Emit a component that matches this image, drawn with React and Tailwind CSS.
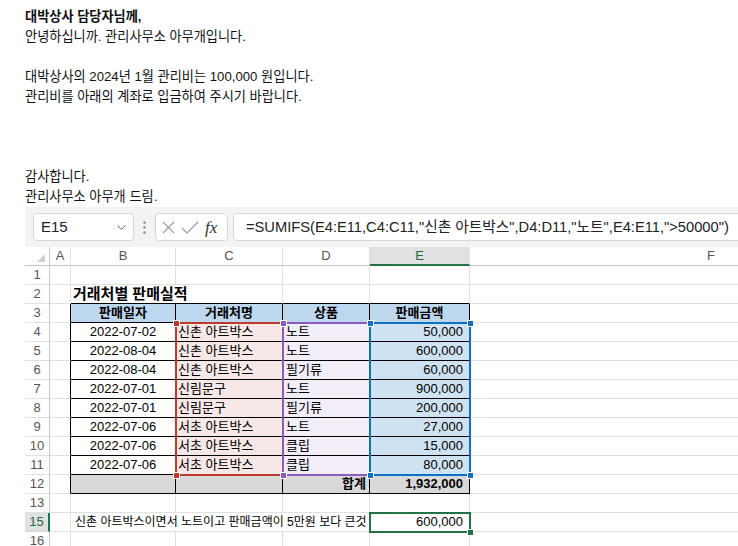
import { ChevronDown } from 'lucide-react';

const rows = [
  ['2022-07-02', '신촌 아트박스', '노트', '50,000'],
  ['2022-08-04', '신촌 아트박스', '노트', '600,000'],
  ['2022-08-04', '신촌 아트박스', '필기류', '60,000'],
  ['2022-07-01', '신림문구', '노트', '900,000'],
  ['2022-07-01', '신림문구', '필기류', '200,000'],
  ['2022-07-06', '서초 아트박스', '노트', '27,000'],
  ['2022-07-06', '서초 아트박스', '클립', '15,000'],
  ['2022-07-06', '서초 아트박스', '클립', '80,000'],
];

// 기본 눈금선 / 표 테두리
const GRID = 'border-r border-b border-[#e1e1e1]';
const BLACK = 'border-r border-b border-black';

const RowHead = ({ n, active }) =>
  active ? (
    <div className="flex items-center justify-center bg-[#e1e1e1] text-[13px] text-[#1e6b41] border-r-2 border-r-[#217346] border-b border-b-[#d4d4d4]">
      {n}
    </div>
  ) : (
    <div className="flex items-center justify-center text-[13px] text-[#555] border-r border-r-[#c6c6c6] border-b border-b-[#e1e1e1]">
      {n}
    </div>
  );

const Handle = ({ x, y, color }) => (
  <div
    className={`absolute w-[7px] h-[7px] border border-white ${color}`}
    style={{ left: x - 3, top: y - 3 }}
  />
);

export default function App() {
  return (
    <div className="w-[738px] h-[546px] overflow-hidden bg-white text-[#1a1a1a] [font-family:'Liberation_Sans','Noto_Sans_CJK_KR',sans-serif]">
      {/* 메일 본문 */}
      <div className="pt-[7px] pl-[25px] h-[207px] text-[13.2px] leading-[20px] text-[#111]">
        <p className="font-bold">대박상사 담당자님께,</p>
        <p>안녕하십니까. 관리사무소 아무개입니다.</p>
        <p>&nbsp;</p>
        <p>대박상사의 2024년 1월 관리비는 100,000 원입니다.</p>
        <p>관리비를 아래의 계좌로 입금하여 주시기 바랍니다.</p>
        <p>&nbsp;</p>
        <p>&nbsp;</p>
        <p>&nbsp;</p>
        <p>감사합니다.</p>
        <p>관리사무소 아무개 드림.</p>
      </div>

      <div className="ml-[25px] overflow-hidden">
        {/* 수식 입력줄 */}
        <div className="h-[40px] bg-[#f3f3f3] flex items-center pl-[8px]">
          <div className="shrink-0 w-[101px] h-[28px] bg-white border border-[#d6d6d6] rounded-[4px] flex items-center justify-between pl-[7px] pr-[4px]">
            <span className="text-[15px] text-[#222]">E15</span>
            <ChevronDown size={15} strokeWidth={1.5} className="text-[#555]" />
          </div>
          <div className="shrink-0 w-[21px] flex justify-center">
            <svg width="3" height="13" viewBox="0 0 3 13">
              <circle cx="1.5" cy="1.5" r="1.2" fill="#8a8a8a" />
              <circle cx="1.5" cy="6.5" r="1.2" fill="#8a8a8a" />
              <circle cx="1.5" cy="11.5" r="1.2" fill="#8a8a8a" />
            </svg>
          </div>
          <div className="shrink-0 w-[73px] h-[28px] bg-white border border-[#d6d6d6] rounded-[4px] flex items-center pl-[6px] gap-[6px]">
            <svg width="13" height="13" viewBox="0 0 13 13">
              <path d="M1 1 L12 12 M12 1 L1 12" stroke="#9b9b9b" strokeWidth="1.1" fill="none" />
            </svg>
            <svg width="18" height="13" viewBox="0 0 18 13">
              <path d="M1 7 L6 12 L17 1" stroke="#9b9b9b" strokeWidth="1.1" fill="none" />
            </svg>
            <span className="text-[17px] italic text-[#333] [font-family:'Liberation_Serif',serif] leading-none">fx</span>
          </div>
          <div className="shrink-0 ml-[5px] w-[540px] h-[28px] bg-white border border-[#d6d6d6] rounded-[4px] flex items-center pl-[12px]">
            <span className="text-[14.7px] text-[#222] whitespace-nowrap">
              =SUMIFS(E4:E11,C4:C11,"신촌 아트박스",D4:D11,"노트",E4:E11,"&gt;50000")
            </span>
          </div>
        </div>

        {/* 시트 */}
        <div className="relative w-[927px] grid grid-cols-[25px_21px_105px_107px_87px_100px_482px] auto-rows-[19px] text-[#000]">
          {/* 열 머리글 */}
          <div className="relative border-r border-b border-[#c6c6c6]">
            <svg className="absolute right-[4px] bottom-[3px]" width="8" height="8" viewBox="0 0 8 8">
              <polygon points="8,0 8,8 0,8" fill="#d0d0d0" />
            </svg>
          </div>
          {['A', 'B', 'C', 'D'].map((c) => (
            <div key={c} className="flex items-center justify-center text-[13px] text-[#555] border-r border-r-[#e1e1e1] border-b border-b-[#c6c6c6]">
              {c}
            </div>
          ))}
          <div className="flex items-center justify-center bg-[#e1e1e1] text-[13px] text-[#1e6b41] border-b-2 border-b-[#217346] border-r border-r-[#e1e1e1]">
            E
          </div>
          <div className="flex items-center justify-center text-[13px] text-[#555] border-b border-b-[#c6c6c6]">F</div>

          {/* 1행 */}
          <RowHead n={1} />
          <div className={GRID} />
          <div className={GRID} />
          <div className={GRID} />
          <div className={GRID} />
          <div className={GRID} />
          <div className={GRID} />

          {/* 2행 */}
          <RowHead n={2} />
          <div className="border-r border-b border-r-[#e1e1e1] border-b-[#e1e1e1]" />
          <div className="col-span-2 flex items-center pl-[2px] text-[15px] font-bold border-r border-b border-r-[#e1e1e1] border-b-black">
            거래처별 판매실적
          </div>
          <div className="border-r border-b border-r-[#e1e1e1] border-b-black" />
          <div className="border-r border-b border-r-[#e1e1e1] border-b-black" />
          <div className={GRID} />

          {/* 3행 머리글 */}
          <RowHead n={3} />
          <div className="border-r border-b border-r-black border-b-[#e1e1e1]" />
          {['판매일자', '거래처명', '상품', '판매금액'].map((h) => (
            <div key={h} className={`${BLACK} bg-[#bdd7ee] flex items-center justify-center text-[13px] font-bold`}>
              {h}
            </div>
          ))}
          <div className={GRID} />

          {/* 4~11행 */}
          {rows.map((r, i) => [
            <RowHead key={`h${i}`} n={i + 4} />,
            <div key={`a${i}`} className="border-r border-b border-r-black border-b-[#e1e1e1]" />,
            <div key={`b${i}`} className={`${BLACK} flex items-center justify-center text-[13px]`}>{r[0]}</div>,
            <div key={`c${i}`} className={`${BLACK} bg-[#f7e8e8] flex items-center pl-[2px] text-[13px]`}>{r[1]}</div>,
            <div key={`d${i}`} className={`${BLACK} bg-[#f2edf7] flex items-center pl-[3px] text-[13px]`}>{r[2]}</div>,
            <div key={`e${i}`} className={`${BLACK} bg-[#cfe2f2] flex items-center justify-end pr-[6px] text-[13px]`}>{r[3]}</div>,
            <div key={`f${i}`} className={GRID} />,
          ])}

          {/* 12행 합계 */}
          <RowHead n={12} />
          <div className="border-r border-b border-r-black border-b-[#e1e1e1]" />
          <div className={`${BLACK} bg-[#d9d9d9]`} />
          <div className={`${BLACK} bg-[#d9d9d9]`} />
          <div className={`${BLACK} bg-[#d9d9d9] flex items-center justify-end pr-[3px] text-[13px] font-bold`}>합계</div>
          <div className={`${BLACK} bg-[#d9d9d9] flex items-center justify-end pr-[6px] text-[13px] font-bold`}>1,932,000</div>
          <div className={GRID} />

          {/* 13행 */}
          <RowHead n={13} />
          <div className={GRID} />
          <div className={GRID} />
          <div className={GRID} />
          <div className={GRID} />
          <div className={GRID} />
          <div className={GRID} />

          {/* 15행 (14행 숨김) */}
          <RowHead n={15} active />
          <div className={GRID} />
          <div className={`col-span-3 ${GRID} flex items-center pl-[4px] text-[12px] whitespace-nowrap`}>
            신촌 아트박스이면서 노트이고 판매금액이 5만원 보다 큰것
          </div>
          <div className={`${GRID} flex items-center justify-end pr-[6px] text-[13px]`}>600,000</div>
          <div className={GRID} />

          {/* 16행 */}
          <RowHead n={16} />
          <div className={GRID} />
          <div className={GRID} />
          <div className={GRID} />
          <div className={GRID} />
          <div className={GRID} />
          <div className={GRID} />

          {/* 수식 참조 범위 표시 */}
          <div className="absolute left-[150px] top-[75px] w-[109px] h-[154px] border-2 border-[#c0392b]" />
          <Handle x={151} y={76} color="bg-[#c0392b]" />
          <Handle x={151} y={228} color="bg-[#c0392b]" />
          <div className="absolute left-[257px] top-[75px] w-[89px] h-[154px] border-2 border-[#8a5cc0]" />
          <Handle x={258} y={76} color="bg-[#8a5cc0]" />
          <Handle x={258} y={228} color="bg-[#8a5cc0]" />
          <div className="absolute left-[344px] top-[75px] w-[102px] h-[154px] border-2 border-[#0f6fc0]" />
          <Handle x={345} y={76} color="bg-[#0f6fc0]" />
          <Handle x={445} y={76} color="bg-[#0f6fc0]" />
          <Handle x={345} y={228} color="bg-[#0f6fc0]" />
          <Handle x={445} y={228} color="bg-[#0f6fc0]" />

          {/* 선택 셀 E15 */}
          <div className="absolute left-[344px] top-[265px] w-[102px] h-[21px] border-2 border-[#217346]" />
          <Handle x={445} y={285} color="bg-[#217346]" />
        </div>
      </div>
    </div>
  );
}
